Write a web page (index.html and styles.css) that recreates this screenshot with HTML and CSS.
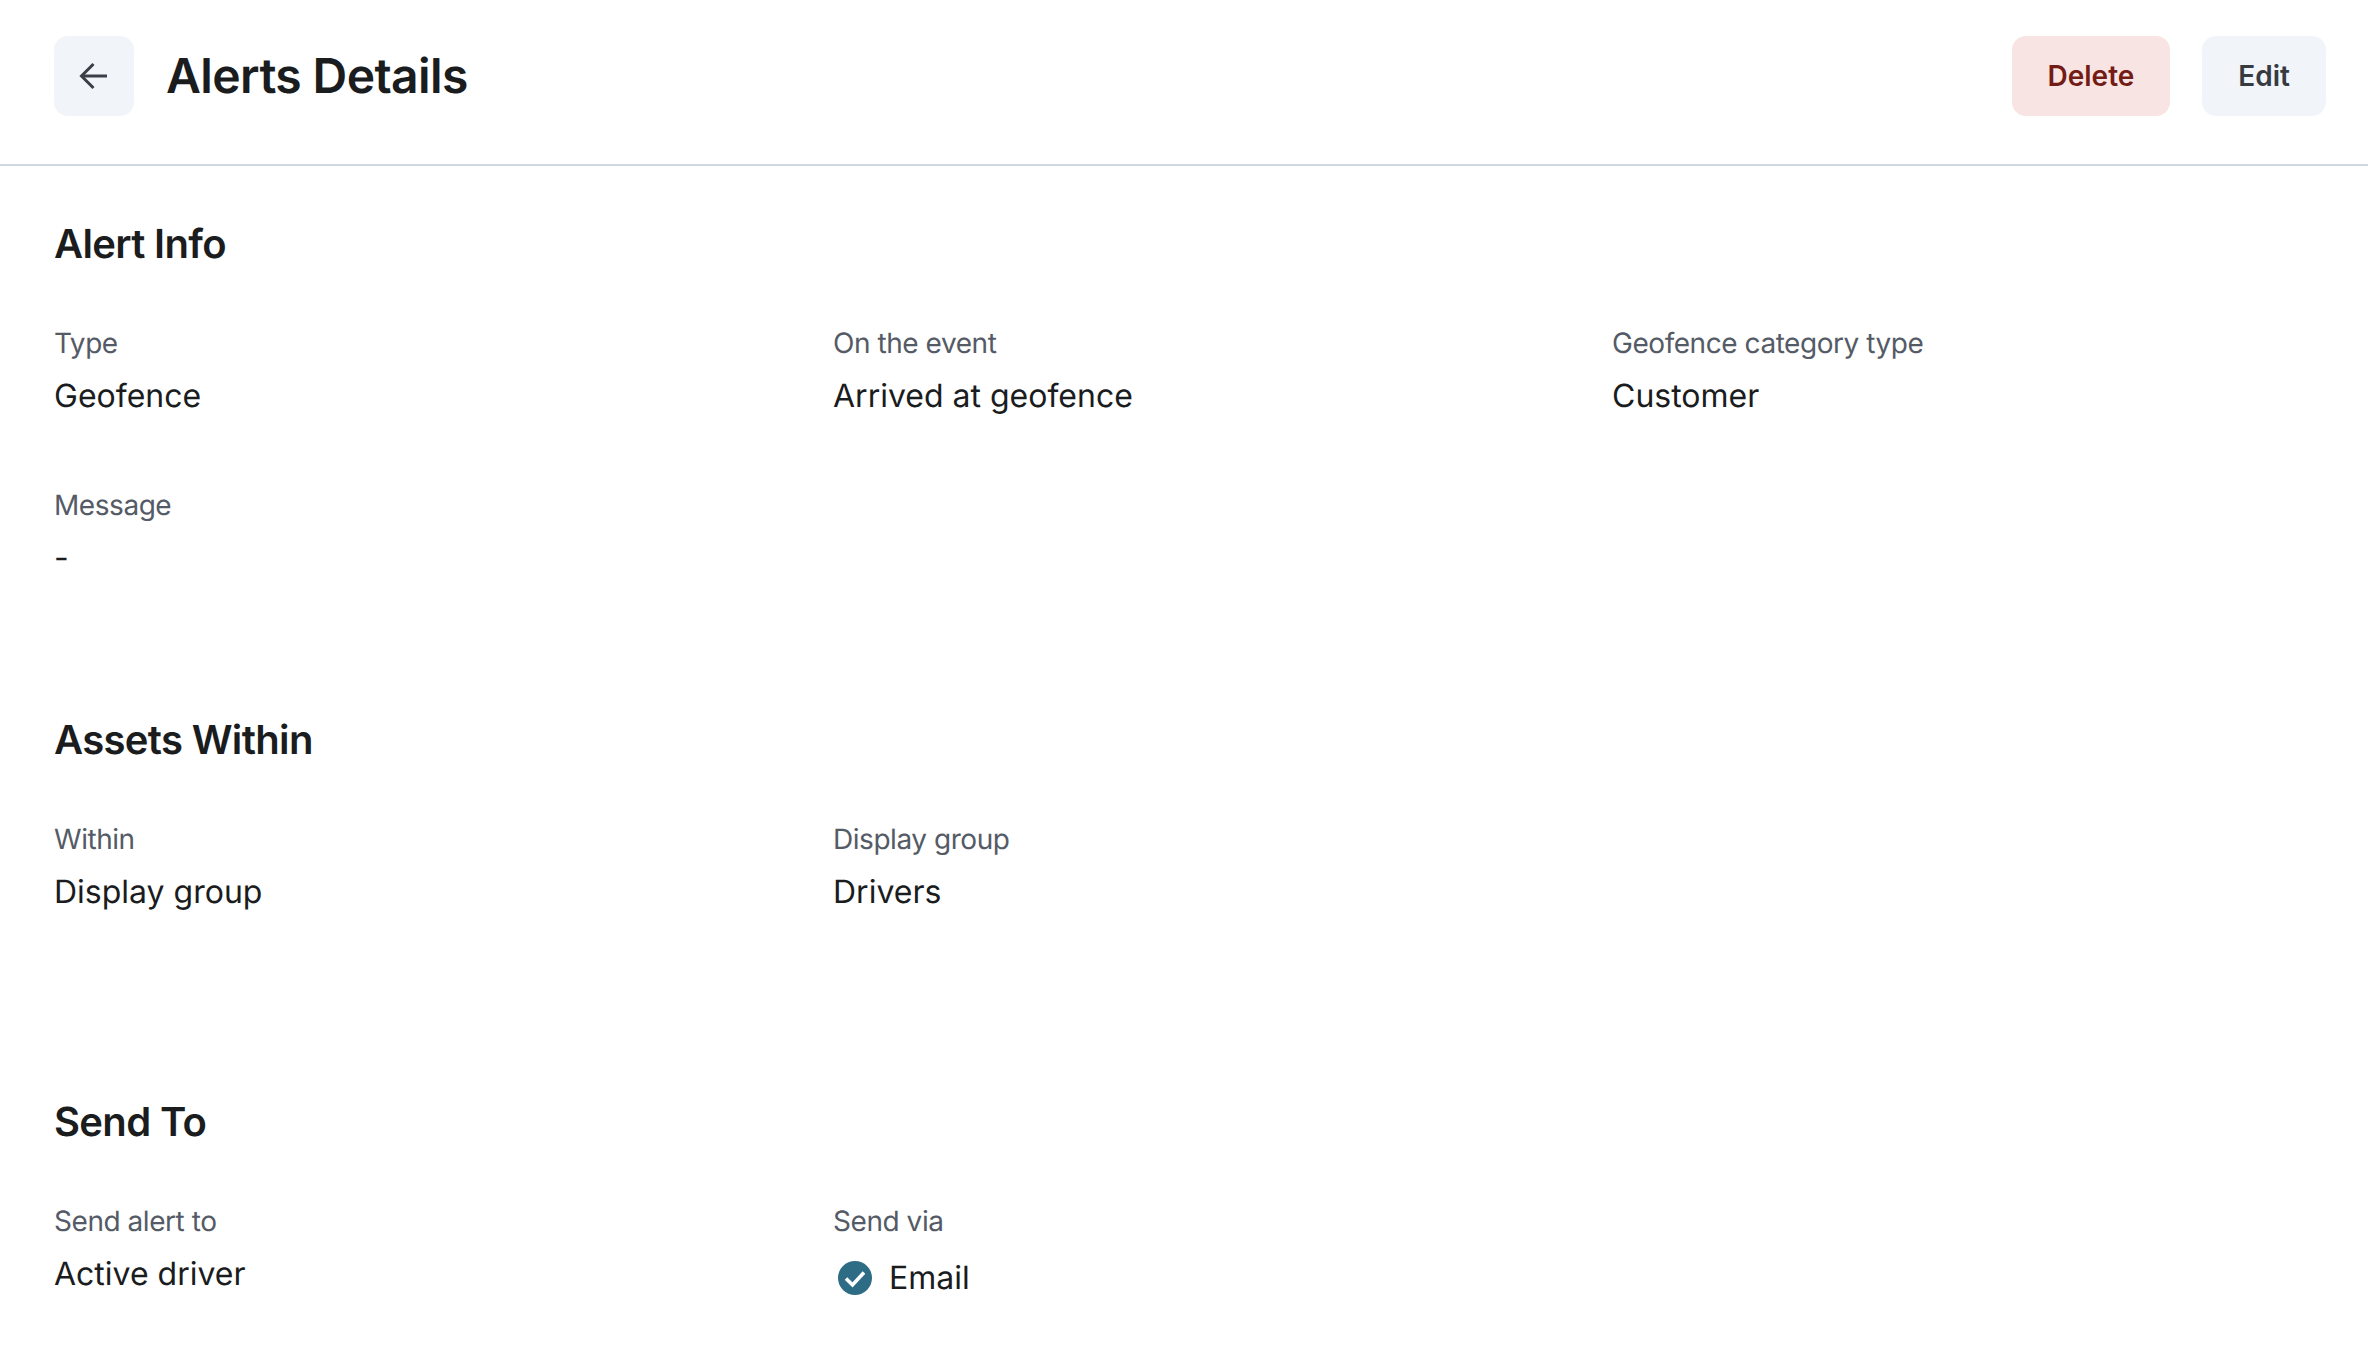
FILE: index.html
```html
<!DOCTYPE html>
<html lang="en">
<head>
    <meta charset="UTF-8">
    <title>Alerts Details</title>
    <link rel="stylesheet" href="styles.css">
</head>
<body>
    <header class="top-bar">
        <button class="btn btn-back" aria-label="Back">
            <svg width="32" height="32" viewBox="0 0 32 32" fill="none" stroke="#3a3f47" stroke-width="3">
                <path d="M29 16H4"/>
                <path d="M15.500 4 L3.500 16 L15.500 28"/>
            </svg>
        </button>
        <h1 class="page-title">Alerts Details</h1>
        <div class="actions">
            <button class="btn btn-delete">Delete</button>
            <button class="btn btn-edit">Edit</button>
        </div>
    </header>

    <main>
        <section class="info-section info-alert">
            <h2>Alert Info</h2>
            <div class="field-grid">
                <div class="field">
                    <span class="field-label">Type</span>
                    <span class="field-value">Geofence</span>
                </div>
                <div class="field">
                    <span class="field-label">On the event</span>
                    <span class="field-value">Arrived at geofence</span>
                </div>
                <div class="field">
                    <span class="field-label">Geofence category type</span>
                    <span class="field-value">Customer</span>
                </div>
                <div class="field">
                    <span class="field-label">Message</span>
                    <span class="field-value">-</span>
                </div>
            </div>
        </section>

        <section class="info-section info-within">
            <h2>Assets Within</h2>
            <div class="field-grid">
                <div class="field">
                    <span class="field-label">Within</span>
                    <span class="field-value">Display group</span>
                </div>
                <div class="field">
                    <span class="field-label">Display group</span>
                    <span class="field-value">Drivers</span>
                </div>
            </div>
        </section>

        <section class="info-section">
            <h2>Send To</h2>
            <div class="field-grid">
                <div class="field">
                    <span class="field-label">Send alert to</span>
                    <span class="field-value">Active driver</span>
                </div>
                <div class="field">
                    <span class="field-label">Send via</span>
                    <span class="field-value check-value">
                        <svg width="34" height="34" viewBox="0 0 34 34">
                            <circle cx="17" cy="17" r="17" fill="#2e6b85"/>
                            <path d="M8 17.500 L14.500 24 L26 11.500" fill="none" stroke="#fff" stroke-width="3.600"/>
                        </svg>
                        Email
                    </span>
                </div>
            </div>
        </section>
    </main>
</body>
</html>
```

FILE: styles.css
```css
* {
    box-sizing: border-box;
}
body {
    margin: 0;
    font-family: Inter, "Liberation Sans", sans-serif;
    text-rendering: geometricPrecision;
    background-color: #fff;
    color: #1a1c1e;
}
.top-bar {
    display: flex;
    align-items: center;
    height: 166px;
    padding: 0 42px 12px 54px;
    border-bottom: 2px solid #d0d7e1;
}
.page-title {
    margin: 0 0 2px 32px;
    font-size: 48px;
    font-weight: 600;
    letter-spacing: -0.6px;
}
.actions {
    display: flex;
    gap: 32px;
    margin-left: auto;
}
.btn {
    height: 80px;
    padding: 0 36px;
    border: none;
    border-radius: 14px;
    font-family: inherit;
    font-size: 28px;
    font-weight: 600;
}
.btn-back {
    display: flex;
    align-items: center;
    justify-content: center;
    width: 80px;
    padding: 0;
    background-color: #f1f4f9;
}
.btn-delete {
    background-color: #f9e4e4;
    color: #731c15;
}
.btn-edit {
    background-color: #f1f4f9;
    color: #363a41;
}
.info-section {
    padding: 0 54px;
}
.info-alert {
    padding-top: 54px;
    height: 550px;
}
.info-within {
    height: 382px;
}
.info-section h2 {
    margin: 0;
    font-size: 40px;
    line-height: 48px;
    font-weight: 600;
    letter-spacing: -0.65px;
}
.field-grid {
    display: grid;
    grid-template-columns: repeat(3, 779px);
    row-gap: 73px;
    margin-top: 58px;
}
.field {
    display: flex;
    flex-direction: column;
    gap: 17px;
}
.field-label {
    font-size: 28px;
    line-height: 34px;
    letter-spacing: -0.45px;
    color: #555b66;
}
.field-value {
    font-size: 32px;
    line-height: 38px;
}
.check-value {
    display: flex;
    align-items: center;
    gap: 17px;
    padding-left: 5px;
    margin-top: 4px;
}
```
